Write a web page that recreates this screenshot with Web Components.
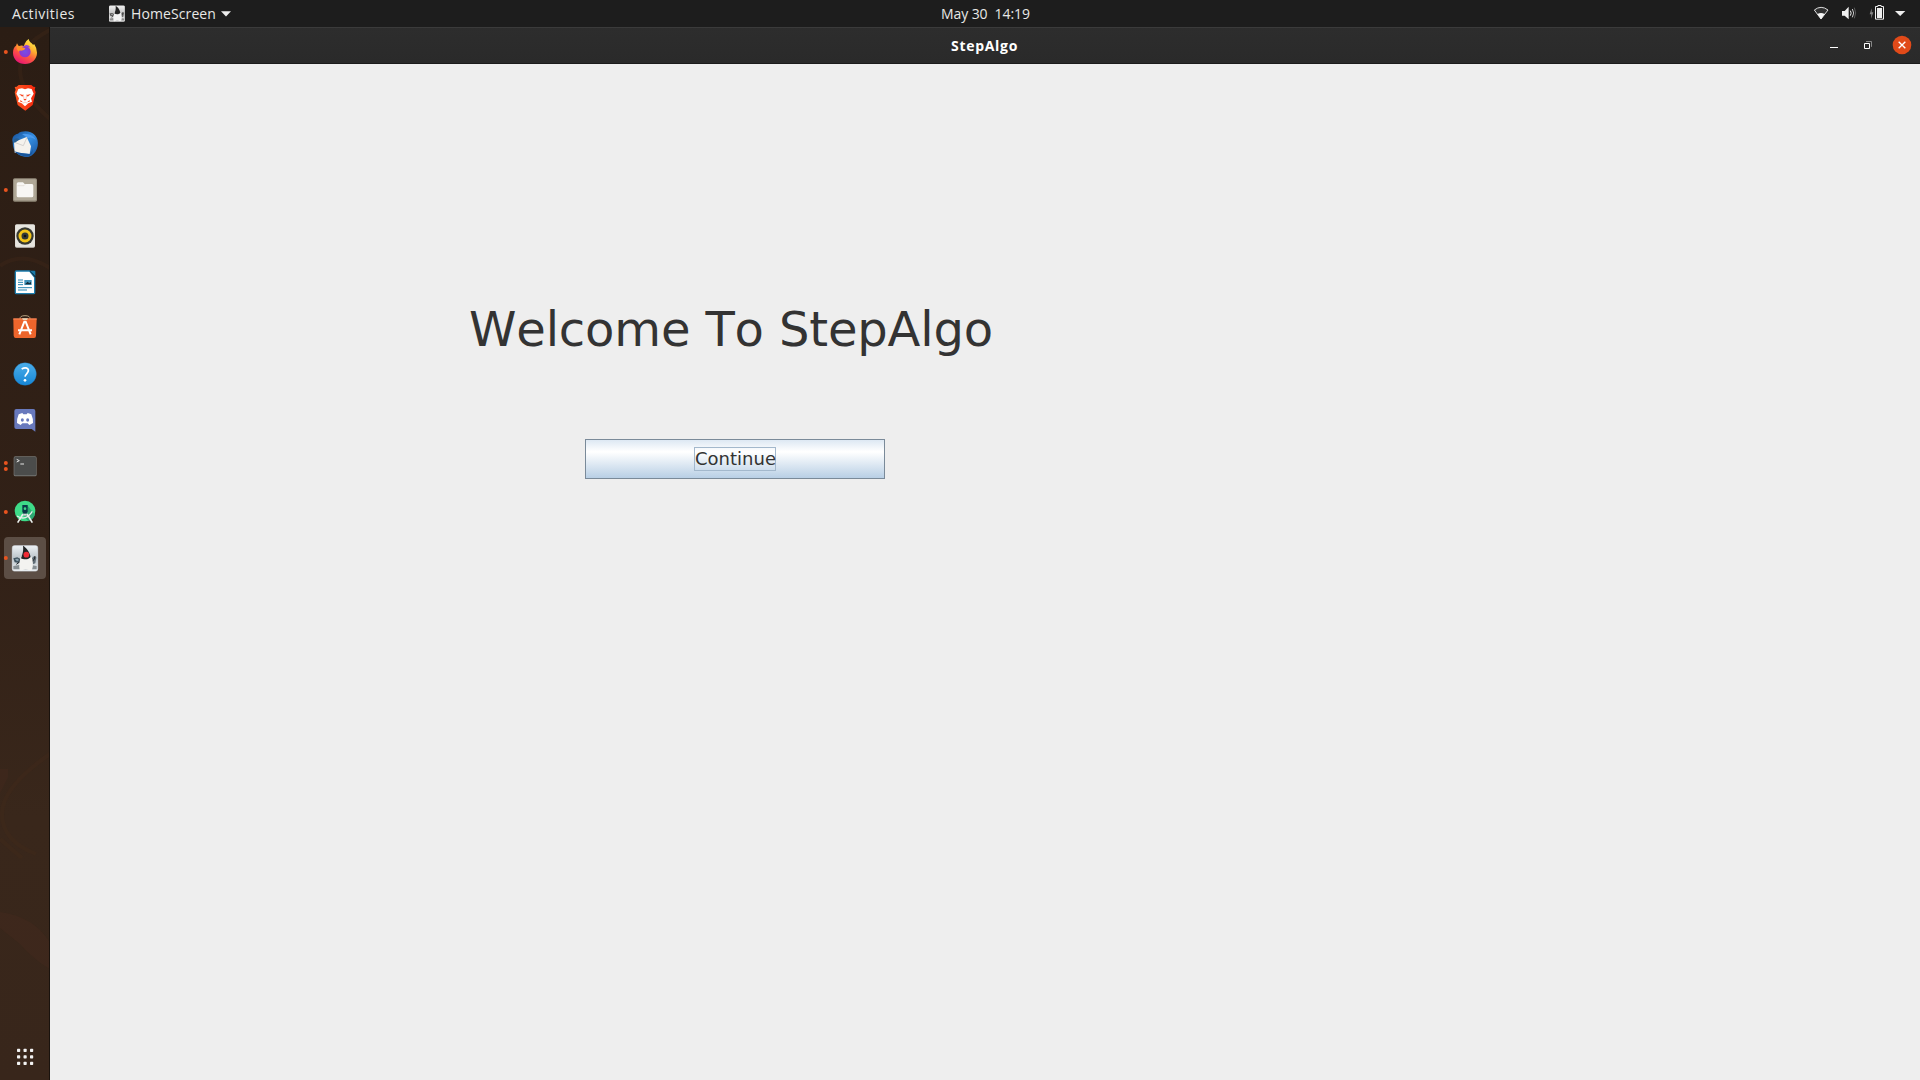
<!DOCTYPE html>
<html lang="en"><head><meta charset="utf-8"><title>StepAlgo</title>
<style>html,body{margin:0;width:1920px;height:1080px;overflow:hidden;background:#eee}</style></head>
<body><desk-shell></desk-shell>
<script>
const define=(name,html,init)=>customElements.define(name,class extends HTMLElement{
 constructor(){super();const t=document.createElement('template');t.innerHTML=html;this.attachShadow({mode:'open'}).append(t.content.cloneNode(true));}
 connectedCallback(){if(init)init(this,this.shadowRoot);}
});

/* Text whose tracking is adjusted to fill a given advance width */
define('fit-label','<style>:host{display:block;white-space:pre;flex:none;font-kerning:none}span{display:inline-block}</style><span></span>',(el,root)=>{
 const s=root.querySelector('span');s.textContent=el.getAttribute('text');
 const w=+el.getAttribute('width');const n=s.textContent.length;
 s.style.letterSpacing=((w-s.getBoundingClientRect().width)/n)+'px';el.style.width=w+'px';
});

const duke=`<defs><linearGradient id="dk" x2="0" y2="1"><stop stop-color="#eef2f5"/><stop offset=".5" stop-color="#b9c2c8"/><stop offset="1" stop-color="#eceff1"/></linearGradient></defs>
<rect x="37" y="35" width="76" height="76" rx="6" fill="url(#dk)" stroke="#dfe8f0" stroke-width="2"/>
<path d="M92 76l10-9 7 3-3 18-12 4z" fill="#5f6c75"/><path d="M40 96q34-7 70 0v10H40z" fill="#868e92"/>
<path d="M40 73l12-3 11 6-6 11-13-2z" fill="#41545f"/><path d="M45 75l9-1 3 5-6 3z" fill="#8fa5b1"/>
<path d="M60 83L49 91M96 83l7-8 2-9" fill="none" stroke="#26292b" stroke-width="3"/>
<path d="M63 66c-4 14-7 28-4 42 8 4 12-2 18-2s11 6 19 1c5-12 3-27-2-40z" fill="#f3f3f0"/>
<path d="M69 35c7 4 19 15 23 34-4 5-9 7-15 7-6 0-11-1-14-3 4-12 8-20 6-38z" fill="#222426"/>`;

define('top-bar',`<style>:host{display:flex;height:27px;background:#1d1d1d;color:#e8e8e6;font:14px/27px "Open Sans","Noto Sans",sans-serif}
.l,.m,.r{display:flex;align-items:center}.l{width:800px;padding-left:12px;box-sizing:border-box}.m{gap:7px;width:180px;padding-left:141px}.r{width:799px;justify-content:flex-end}
.i{margin-left:34px;margin-right:6px}.a{margin-left:5px}svg{display:block;flex:none}fit-label{height:27px}</style>
<div class="l"><fit-label text="Activities" width="63"></fit-label><svg class="i" width="16" height="17" viewBox="37 34 77 77" style="filter:grayscale(1)">${duke}</svg><fit-label text="HomeScreen" width="85"></fit-label><svg class="a" width="10" height="6" viewBox="0 0 10 6"><path d="M0 .2h10L5 5.4z" fill="#ededed"/></svg></div>
<div class="m"><fit-label text="May 30" width="46.5"></fit-label><fit-label text="14:19" width="35.5"></fit-label></div>
<div class="r"><svg width="140" height="27" viewBox="0 0 420 81"><path d="M103 30Q123 14 144 30L123 57z" fill="#303030" stroke="#ddd" stroke-width="3" stroke-linejoin="round"/><path d="M112 42q11-6 22 0L123 58z" fill="#f4f4f4"/>
<path d="M186 33h8l12-13v38L194 47h-8z" fill="#f0f0f0"/><path d="M211 32q5 7 0 15" fill="none" stroke="#eee" stroke-width="3"/><path d="M217 27q8 12 0 25" fill="none" stroke="#ccc" stroke-width="3"/><path d="M223 23q8 16 0 32" fill="none" stroke="#777" stroke-width="2"/>
<path d="M275 25l-6 18h5l-1 13 7-19h-5z" fill="#888"/><path d="M286.500 19.500h7v-3h10v3h7v38h-24z" fill="none" stroke="#f0f0f0" stroke-width="3"/><path d="M291 24h15v30h-15z" fill="#eee"/><path d="M345 33h31l-15.500 15z" fill="#eee"/></svg></div>`);

define('title-bar',`<style>:host{display:flex;box-sizing:border-box;height:37px;border-top:1px solid #3b3b3b;border-bottom:1px solid #1c1c1c;background:linear-gradient(#2d2d2d,#2a2a2a);color:#fff;font:bold 14px/35px "Open Sans","Noto Sans",sans-serif;padding-left:901px;justify-content:space-between}
svg{display:block}</style><fit-label text="StepAlgo" width="67"></fit-label>
<svg width="140" height="35" viewBox="0 84 420 105"><path d="M150 141h24v3h-24z" fill="#fff"/><path d="M258 124.500h16.500v16" fill="none" stroke="#888" stroke-width="3"/><path d="M253.500 130.500h15v15h-15z" fill="none" stroke="#fff" stroke-width="3"/><circle cx="366" cy="135" r="28" fill="#e14a19"/><path d="M356 125l20 20M376 125l-20 20" stroke="#fff" stroke-width="4"/></svg>`);

const glyphs={
firefox:`<defs><linearGradient id="f" x1=".8" y1="0" x2=".25" y2="1"><stop stop-color="#fff44f"/><stop offset=".35" stop-color="#ffb02e"/><stop offset=".62" stop-color="#ff573f"/><stop offset="1" stop-color="#e51079"/></linearGradient><radialGradient id="v"><stop stop-color="#7350e8"/><stop offset="1" stop-color="#8e36cf"/></radialGradient></defs>
<path d="M39 74c0-12 4-17 9-21l3-7 5 9q8-4 16-1l2-7q4-9 12-14c1 9 8 11 13 17l4-1q8 12 8 25c0 20-16 34-36 34S39 94 39 74z" fill="url(#f)"/><circle cx="75" cy="71" r="17" fill="url(#v)"/><path d="M50 54q10-3 17 4l9 3-4 5-9 2q-6-1-8 3-6-8-5-17z" fill="#ff922b"/><path d="M74 52q12-4 18 8-6-4-11-2z" fill="#8e43e5"/>`,
brave:`<defs><linearGradient id="b"><stop stop-color="#ff5722"/><stop offset="1" stop-color="#f3260c"/></linearGradient></defs><path d="M56 33h38l6 5 6 1-2 8 3 8-9 38-22 17-23-17-9-38 3-8-3-8 6-1z" fill="url(#b)"/><path d="M55 45l11-2 9 3 9-3 11 2 6 14-8 14 3 10-11 5-10 9-10-9-11-5 3-10-8-14z" fill="#fff"/><path d="M57 60l13 3-3 5zM93 60l-13 3 3 5zM70 75h10l-5 5zM61 78l8 7-8-2zM89 78l-8 7 8-2z" fill="#f9421b"/><path d="M70 61l2 14M80 61l-2 14M68 88l7-4 7 4" stroke="#f98870" stroke-width="1.500" fill="none"/>`,
mail:`<defs><linearGradient id="t" y2="1"><stop stop-color="#164e96"/><stop offset=".5" stop-color="#358de0"/><stop offset="1" stop-color="#17519b"/></linearGradient></defs><path d="M38 66c-4-13 4-23 16-25 10-9 38-11 51 5 15 16 10 49-11 61-14 8-34 2-43-7-9-7-13-20-13-34z" fill="url(#t)"/><path d="M66 42q28-4 42 18-12-11-24-6z" fill="#4c9bef"/><path d="M42 66l38-15 13 28-4 23-45-4z" fill="#f5f2ed"/><path d="M46 68l24 9 11-25" fill="none" stroke="#c2c1c1" stroke-width="2"/><path d="M42 57q9-5 17 1l-12 9-7 2z" fill="#285f93"/><path d="M42 94q20 7 47 8 8-6 8-16 4 20-16 24-23-1-39-16z" fill="#18559b"/>`,
files:`<rect x="39" y="55" width="72" height="70" rx="5" fill="#938a79"/><rect x="41" y="57" width="68" height="65" rx="4" fill="#b0a897" stroke="#817a6c"/><path d="M50 72q0-5 5-5h14l5 5h22q4 0 4 5v30q0 5-5 5H55q-5 0-5-5z" fill="#f8f7f4"/><path d="M52 77h20l4-4" fill="none" stroke="#ded9d0" stroke-width="2"/>`,
music:`<rect x="45" y="37" width="60" height="70" rx="5" fill="#d2d0ca"/><rect x="46" y="38" width="58" height="66" rx="4" fill="#e7e5df"/><circle cx="75" cy="72" r="26" fill="#363831"/><circle cx="75" cy="72" r="15" fill="none" stroke="#f3c419" stroke-width="9"/><circle cx="75" cy="72" r="9" fill="#333a38"/><circle cx="75" cy="72" r="4" fill="#111"/>`,
writer:`<path d="M49 39h40l15 19v47q0 2-3 2H49q-3 0-3-3V42q0-3 3-3z" fill="#fff" stroke="#1d7eae" stroke-width="4"/><path d="M88 38h15q3 0 3 3v18z" fill="#102d3d"/><path d="M90 38h13q3 0 3 3v13z" fill="#1b79a6"/><path d="M54 66h15M54 73h15M54 80h15M54 89h42M54 96h27" stroke="#2787b3" stroke-width="3"/><rect x="73" y="66" width="22" height="15" fill="#4093ba"/><path d="M75 79l8-8 5 5 5-5v8z" fill="#152c37"/>`,
shop:`<path d="M60 45q-1-10 15-10t15 10" fill="none" stroke="#b8a180" stroke-width="3"/><path d="M40 44h70l-2 51q0 7-6 7H47q-5 0-6-7z" fill="#ed652c"/><path d="M40 43h70v4H40z" fill="#f58254"/><path d="M58 91L73 53h4l15 38M54 79h42" fill="none" stroke="#fff" stroke-width="6"/><path d="M66 43h18l-3 5H69z" fill="#e7d8bb"/>`,
help:`<defs><linearGradient id="h" x2="0" y2="1"><stop stop-color="#4caeea"/><stop offset="1" stop-color="#1686d5"/></linearGradient></defs><circle cx="75" cy="72" r="34" fill="url(#h)" stroke="#1b76bc"/><path d="M65 57q12-7 19 0c6 10-8 14-9 23" fill="none" stroke="#fff" stroke-width="5"/><circle cx="75" cy="91" r="4" fill="#fff"/>`,
discord:`<path d="M49 39h51q6 0 6 6v62L95 99H49q-6 0-6-6V45q0-6 6-6z" fill="#6879bd"/><path d="M56 55l11-4 3 4h10l3-4 11 4q6 14 5 26l-11 6-5-5H67l-5 5-11-6q-1-12 5-26z" fill="#fff"/><ellipse cx="67" cy="72" rx="4.500" ry="5" fill="#6879bd"/><ellipse cx="83" cy="72" rx="4.500" ry="5" fill="#6879bd"/>`,
term:`<rect x="41" y="43" width="69" height="60" rx="5" fill="#737472"/><rect x="43" y="45" width="65" height="55" rx="3" fill="#4b4c4b"/><path d="M50 52l8 4-8 4M61 66h11" fill="none" stroke="#e4e4e4" stroke-width="3"/>`,
android:`<circle cx="75" cy="69" r="31" fill="#3edb88"/><path d="M81 51l24 29q-5 14-20 20L66 76z" fill="#2daa73"/><path d="M67 51h16v20l-8 12-8-12z" fill="#0b3847"/><circle cx="75" cy="62" r="4" fill="#3ed785"/><path d="M69 78L53 104M81 78l16 26" stroke="#e8eeec" stroke-width="5"/><path d="M51 84q26 17 46-14" stroke="#e8eeec" stroke-width="4" fill="none"/><path d="M70 77h10v6H70z" fill="#d1dbd8"/>`,
duke:`<rect x="12" y="9" width="126" height="126" rx="12" fill="#5c4e45"/>${duke}<circle cx="79" cy="62" r="8.500" fill="#f02b35"/>`
};
define('dock-item','<style>:host,svg{display:block;width:50px;height:46px}</style><svg viewBox="0 0 150 138"></svg>',(el,r)=>{
 const k=el.getAttribute('app'),n=+el.getAttribute('windows')||0;
 const dots={0:[],1:[72],2:[63,81]}[n].map(y=>`<circle cx="17.500" cy="${y}" r="6" fill="#e9541f"/>`).join('');
 r.querySelector('svg').innerHTML=`<g transform="translate(0 ${+el.getAttribute('shift')||0})">${glyphs[k]}</g>`+dots;
});
define('dock-bar',`<style>:host{display:flex;flex-direction:column;box-sizing:border-box;width:50px;height:1053px;padding-top:1px;border-right:1px solid #19120d;overflow:hidden;background:url('data:image/svg+xml,<svg xmlns="http://www.w3.org/2000/svg" width="50" height="1053"><g fill="none" stroke="%23462a1b" stroke-opacity=".3" stroke-width="4"><path d="M50 3Q20 18 20 42T50 92M0 239Q22 223 50 241M50 727Q2 760 2 787T36 827M0 812L22 831"/></g><path d="M0 742h8v8L0 766zM0 885Q35 890 50 916V942Q34 933 20 917L0 901z" fill="%23472a1d" fill-opacity=".4"/></svg>'),linear-gradient(#2b1d14,#322117 50%,#39271b 75%,#38261b)}
dock-item{flex:none}.grow{flex:1}.g{display:block;margin:0 0 13px}</style>
<dock-item app="firefox" windows="1"></dock-item><dock-item app="brave"></dock-item><dock-item app="mail"></dock-item><dock-item app="files" windows="1" shift="-18"></dock-item><dock-item app="music"></dock-item><dock-item app="writer"></dock-item><dock-item app="shop"></dock-item><dock-item app="help"></dock-item><dock-item app="discord"></dock-item><dock-item app="term" windows="2"></dock-item><dock-item app="android" windows="1"></dock-item><dock-item app="duke" windows="1"></dock-item>
<div class="grow"></div><svg class="g" width="50" height="20" viewBox="0 0 50 20"><g fill="#f2f2f2">${[17,23.500,30].map(x=>[2.5,9,15.5].map(y=>`<rect x="${x}" y="${y-.7}" width="3.200" height="3.200" rx=".7"/>`).join('')).join('')}</g></svg>`);

define('metal-button',`<style>:host{display:block}button{all:unset;box-sizing:border-box;display:flex;align-items:center;justify-content:center;width:300px;height:40px;border:1px solid #7a8a99;background:linear-gradient(#dde8f3,#fff 30%,#fff 32%,#b8cfe5);color:#333;font:18px/22px "DejaVu Sans",sans-serif}.f{border:1px solid #a3b8cc;height:22px;width:80px;display:flex}</style><button><span class="f"><fit-label text="Continue" width="81"></fit-label></span></button>`);
define('home-screen',`<style>:host{display:block;box-sizing:border-box;height:1016px;background:#eee;padding-top:235px}.h{margin-left:419px;height:60px;font:48px/60px "DejaVu Sans",sans-serif;color:#333}metal-button{margin:80px 0 0 535px}</style><div class="h"><fit-label text="Welcome To StepAlgo" width="524"></fit-label></div><metal-button></metal-button>`);
define('desk-shell',`<style>:host{display:flex;flex-direction:column;width:1920px;height:1080px}.b{display:flex}.w{flex:1}</style><top-bar></top-bar><div class="b"><dock-bar></dock-bar><div class="w"><title-bar></title-bar><home-screen></home-screen></div></div>`);
</script></body></html>
